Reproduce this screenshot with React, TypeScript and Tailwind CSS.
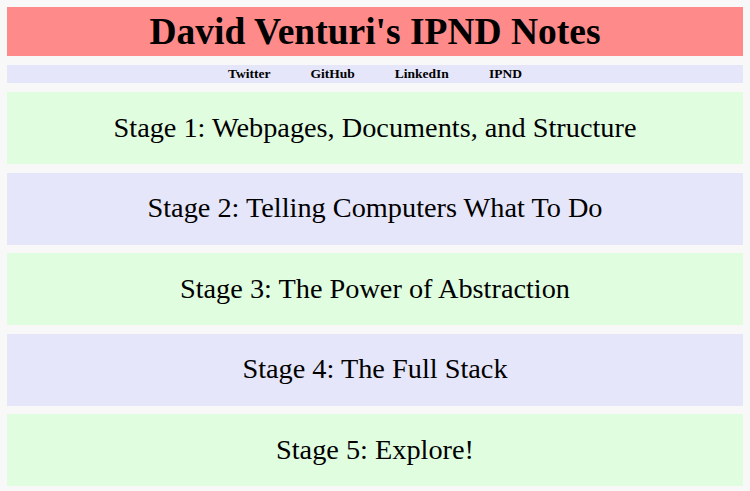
const STAGES = [
  { title: 'Stage 1: Webpages, Documents, and Structure', color: 'bg-[#e0fde0]' },
  { title: 'Stage 2: Telling Computers What To Do', color: 'bg-[#e6e6fa]' },
  { title: 'Stage 3: The Power of Abstraction', color: 'bg-[#e0fde0]' },
  { title: 'Stage 4: The Full Stack', color: 'bg-[#e6e6fa]' },
  { title: 'Stage 5: Explore!', color: 'bg-[#e0fde0]' },
];

const LINKS = ['Twitter', 'GitHub', 'LinkedIn', 'IPND'];

export default function App() {
  return (
    <div className="min-h-[491px] bg-[#f8f8f8] px-[7px] pt-[7px] font-['Liberation_Serif',serif] text-black">
      {/* Header */}
      <header className="flex h-[49px] items-center justify-center bg-[#ff8a8a]">
        <h1 className="text-[37.5px] font-bold leading-none">David Venturi's IPND Notes</h1>
      </header>

      {/* Nav */}
      <nav className="mt-[9px] flex h-[18px] items-center justify-center gap-[40px] bg-[#e6e6fa] text-[13.5px] font-bold">
        {LINKS.map((link) => (
          <a key={link} href="#">{link}</a>
        ))}
      </nav>

      {/* Stages */}
      <div className="mt-[9px] flex flex-col gap-[8.5px]">
        {STAGES.map((stage) => (
          <section key={stage.title} className={`flex h-[72px] items-center justify-center ${stage.color}`}>
            <h2 className="text-[28.3px] leading-none">{stage.title}</h2>
          </section>
        ))}
      </div>
    </div>
  );
}
